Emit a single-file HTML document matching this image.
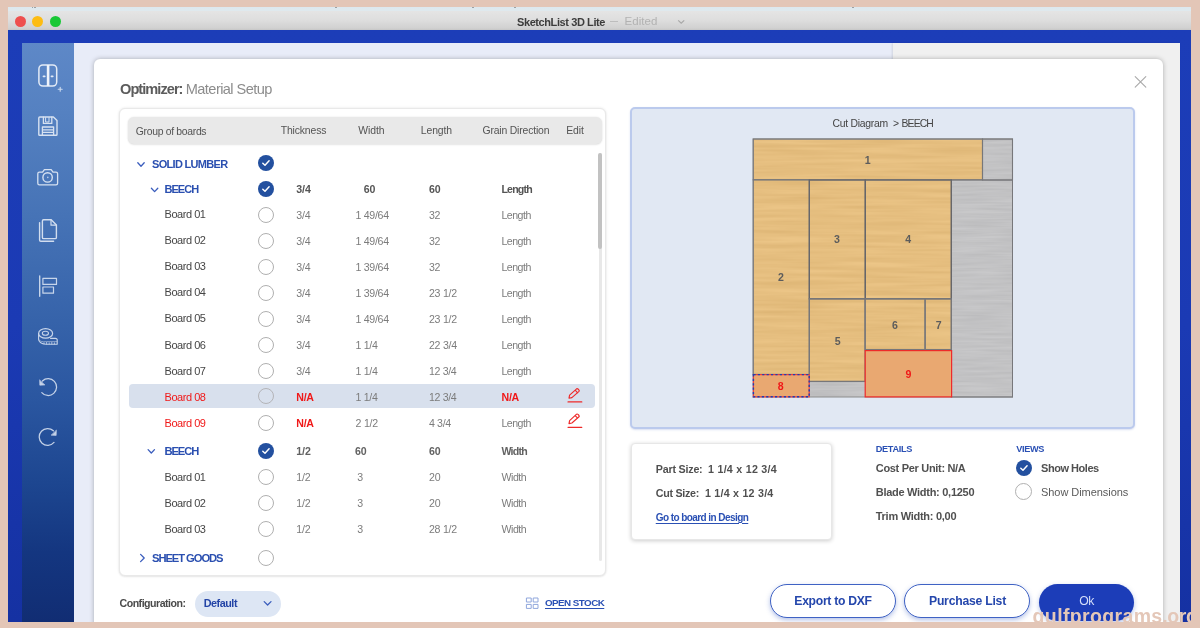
<!DOCTYPE html>
<html><head><meta charset="utf-8"><title>SketchList 3D Lite</title>
<style>
html,body{margin:0;padding:0;}
body{width:1200px;height:628px;overflow:hidden;background:#e3c6b7;position:relative;font-family:"Liberation Sans",sans-serif;}
.abs,.t,svg{position:absolute;}
.t{white-space:nowrap;line-height:1;font-family:"Liberation Sans",sans-serif;}
#win{left:8px;top:7px;width:1183px;height:615px;overflow:hidden;background:#1c3db8;}
/* everything inside #stage uses page coordinates */
#stage{will-change:transform;position:absolute;left:-8px;top:-7px;width:1200px;height:628px;}
#tbar{left:8px;top:7px;width:1183px;height:23px;background:linear-gradient(#dde8ee 0,#dfe9ee 3.5px,#e4e4e4 4.5px,#dedede 13px,#d1d1d1 21px,#c6c6c6 23px);}
.dot{width:11px;height:11px;border-radius:50%;top:15.5px;}
#frame{left:8px;top:30px;width:1183px;height:592px;background:linear-gradient(#1c3db8 0,#1b3ab4 50%,#1531a2 100%);}
#side{left:22px;top:43px;width:52px;height:579px;background:linear-gradient(#5e88c7 0,#5581c1 12%,#4673b6 30%,#3663aa 48%,#2a56a0 62%,#1d4690 76%,#143680 88%,#112d73 100%);}
#mainL{left:74px;top:43px;width:819px;height:579px;background:#e8ecf8;}
#mainR{left:893px;top:43px;width:287px;height:579px;background:#f0f0f0;box-shadow:-1px 0 2px rgba(0,0,0,.10);}
#modal{left:94px;top:59px;width:1069px;height:580px;background:#fff;border-radius:6px;box-shadow:0 0 5px rgba(0,0,0,.28);}
#tbl{left:119px;top:108px;width:487px;height:468px;box-sizing:border-box;border:1px solid #e9e9e9;border-radius:6px;background:#fff;box-shadow:0 0 3px rgba(0,0,0,.10),0 1px 2px rgba(0,0,0,.06);}
#thead{left:127.5px;top:116.5px;width:474px;height:27.7px;background:#e9e9e9;border-radius:6px;box-shadow:0 0 2px rgba(0,0,0,.10),0 1px 2px rgba(0,0,0,.08);}
#sbtrack{left:598.5px;top:153px;width:3px;height:408px;background:#e8e8e8;border-radius:2px;}
#sbthumb{left:598px;top:153px;width:4px;height:96px;background:#c2c2c2;border-radius:2px;}
#hl{left:128.5px;top:384px;width:466.5px;height:24px;background:#d8e0ed;border-radius:4px;}
.rad{width:16px;height:16px;box-sizing:border-box;border:1.4px solid #b0b0b0;border-radius:50%;background:#fff;}
.chk{width:16px;height:16px;border-radius:50%;background:#23509f;}
#dia{left:630px;top:107px;width:504.5px;height:321.5px;box-sizing:border-box;background:#e1e8f3;border:2px solid #bbcaed;border-radius:5px;box-shadow:0 1px 2px rgba(80,110,190,.22);}
#card{left:631px;top:443px;width:200.5px;height:96.5px;box-sizing:border-box;background:#fff;border:1px solid #e7e7e7;border-radius:4px;box-shadow:0 1px 4px rgba(0,0,0,.20);}
.btn{box-sizing:border-box;height:33.5px;top:584px;border-radius:17px;background:#fff;border:1.2px solid #3f62c4;box-shadow:0 2px 5px rgba(40,80,190,.35);}
#ok{left:1038.5px;top:583.5px;width:95.5px;height:37px;border-radius:18.5px;background:#1c3db8;box-shadow:0 2px 5px rgba(40,80,190,.35);}
#pill{left:195px;top:590.5px;width:85.5px;height:26.5px;border-radius:13.5px;background:#dde6f4;}

</style></head>
<body>
<div id="win" class="abs"><div id="stage">
<div id="tbar" class="abs"></div>
<div class="abs" style="left:31.5px;top:7px;width:1.6px;height:1.3px;background:#666;opacity:.55"></div><div class="abs" style="left:34.2px;top:7px;width:1.6px;height:1.3px;background:#666;opacity:.55"></div><div class="abs" style="left:335px;top:7px;width:1.6px;height:1.3px;background:#666;opacity:.55"></div><div class="abs" style="left:472px;top:7px;width:1.6px;height:1.3px;background:#666;opacity:.55"></div><div class="abs" style="left:514px;top:7px;width:1.6px;height:1.3px;background:#666;opacity:.55"></div><div class="abs" style="left:852px;top:7px;width:1.6px;height:1.3px;background:#666;opacity:.55"></div>
<div class="abs dot" style="left:15px;background:#ee4f4e"></div>
<div class="abs dot" style="left:32px;background:#fdbc12"></div>
<div class="abs dot" style="left:49.5px;background:#19c836"></div>
<svg style="left:677px;top:18px" width="9" height="8" viewBox="0 0 9 8"><path d="M1.2 2.4 L4.2 5.2 L7.2 2.4" fill="none" stroke="#a8a8a8" stroke-width="1.2"/></svg>
<div class="abs" style="left:609.6px;top:21.2px;width:8.4px;height:1px;background:#bdbdbd"></div>
<div id="frame" class="abs"></div>
<div id="side" class="abs"></div>
<div id="mainL" class="abs"></div>
<div id="mainR" class="abs"></div>
<svg style="left:0;top:0" width="1200" height="628" viewBox="0 0 1200 628" fill="none" stroke="#e2eaf6" stroke-width="1.5" stroke-linecap="round" stroke-linejoin="round">
<!-- 1 cabinet -->
<rect x="38.9" y="64.9" width="17.8" height="21.2" rx="4"/>
<path d="M48.1 65 V86" stroke-width="2.6" stroke-linecap="butt" stroke="#eef3fb"/>
<path d="M43.4 76.4 H44.8 M51.4 76.4 H52.8" stroke-width="1.6"/>
<path d="M60.2 87.2 V91.2 M58.2 89.2 H62.2" stroke-width="1.1" opacity=".85"/>
<!-- 2 floppy -->
<g opacity=".92">
<path d="M39.8 117 H53.4 L57 120.6 V134.4 Q57 135.2 56.2 135.2 H39.6 Q38.8 135.2 38.8 134.4 V118 Q38.8 117 39.8 117 Z" stroke-width="1.4"/>
<path d="M43.4 117.2 V123.4 H51.8 V117.2" stroke-width="1.3"/>
<path d="M45.6 117.6 V122 H49 V117.6" stroke-width="1"/>
<path d="M42.4 135 V127 H53.6 V135 M42.6 129.8 H53.4 M42.6 132.4 H53.4" stroke-width="1.3"/>
</g>
<!-- 3 camera -->
<g opacity=".92">
<path d="M39.4 172.2 H42.6 L44.4 169.6 H51.2 L53 172.2 H56 Q57.6 172.2 57.6 173.8 V183.2 Q57.6 184.8 56 184.8 H39.4 Q37.8 184.8 37.8 183.2 V173.8 Q37.8 172.2 39.4 172.2 Z" stroke-width="1.3"/>
<circle cx="47.6" cy="177.4" r="4.7" stroke-width="1.4"/>
<circle cx="47.8" cy="177.4" r="0.8" fill="#c4d4ec" stroke="none"/>
</g>
<!-- 4 docs -->
<g opacity=".9">
<path d="M43.6 219.8 H51.2 L56.4 225 V237.4 Q56.4 238.6 55.2 238.6 H43.6 Q42.4 238.6 42.4 237.4 V221 Q42.4 219.8 43.6 219.8 Z" stroke-width="1.4"/>
<path d="M51 220 V225.2 H56.2" stroke-width="1.2"/>
<path d="M39.6 222.6 V240 Q39.6 241.2 40.8 241.2 H53.6" stroke-width="1.4"/>
</g>
<!-- 5 align -->
<g opacity=".84">
<path d="M39.7 276 V296.2" stroke-width="1.4"/>
<rect x="42.9" y="278.4" width="13.6" height="6" stroke-width="1.2"/>
<rect x="42.9" y="287" width="10.6" height="6.2" stroke-width="1.2"/>
</g>
<!-- 6 tape -->
<g opacity=".85">
<ellipse cx="45.6" cy="333.4" rx="7" ry="4.8" stroke-width="1.2"/>
<ellipse cx="45.4" cy="333.2" rx="3.1" ry="2" stroke-width="1.1"/>
<path d="M38.6 333.6 V339.2 Q38.8 343.6 46 344.2 H57.2 V339.6 Q57 338.6 55.4 338.4 H50.6" stroke-width="1.1"/>
<path d="M38.8 339.6 Q40 342.4 46.4 341.6 H56.8" stroke-width="0.8" opacity=".7"/>
<path d="M44 342.8 V344 M46.6 342.4 V344 M49.2 342.8 V344 M51.8 342.4 V344 M54.4 342.8 V344" stroke-width="0.8"/>
</g>
<!-- 7 undo -->
<g opacity=".84">
<path d="M42.4 381 A8.4 8.4 0 1 1 41.8 392.6" stroke-width="1.25"/>
<path d="M39.6 380.2 L39.8 385.2 L44.6 385 Z" fill="#e2eaf6" stroke-width="0.6"/>
</g>
<!-- 8 redo -->
<g opacity=".84">
<path d="M53.4 430.8 A8.4 8.4 0 1 0 54 442.4" stroke-width="1.25"/>
<path d="M56.4 430.4 L56.2 435.4 L51.4 435.2 Z" fill="#e2eaf6" stroke-width="0.6"/>
</g>
</svg>

<div id="modal" class="abs"></div>
<div id="tbl" class="abs"></div>
<div id="thead" class="abs"></div>
<div id="sbtrack" class="abs"></div>
<div id="sbthumb" class="abs"></div>
<div id="hl" class="abs"></div>
<div class="abs chk" style="left:258.4px;top:155.35px"><svg style="left:0;top:0" width="16" height="16" viewBox="0 0 16 16"><path d="M4.8 8.2 L7.0 10.3 L11.1 5.8" fill="none" stroke="#fff" stroke-width="1.45" stroke-linecap="round" stroke-linejoin="round"/></svg></div>
<div class="abs chk" style="left:258.4px;top:181.10px"><svg style="left:0;top:0" width="16" height="16" viewBox="0 0 16 16"><path d="M4.8 8.2 L7.0 10.3 L11.1 5.8" fill="none" stroke="#fff" stroke-width="1.45" stroke-linecap="round" stroke-linejoin="round"/></svg></div>
<div class="abs rad" style="left:258.4px;top:206.70px;"></div>
<div class="abs rad" style="left:258.4px;top:232.70px;"></div>
<div class="abs rad" style="left:258.4px;top:258.70px;"></div>
<div class="abs rad" style="left:258.4px;top:284.70px;"></div>
<div class="abs rad" style="left:258.4px;top:310.70px;"></div>
<div class="abs rad" style="left:258.4px;top:336.70px;"></div>
<div class="abs rad" style="left:258.4px;top:362.90px;"></div>
<div class="abs rad" style="left:258.4px;top:388.40px;background:transparent;border-color:#b4b4b8;"></div>
<div class="abs rad" style="left:258.4px;top:415.10px;"></div>
<div class="abs chk" style="left:258.4px;top:442.90px"><svg style="left:0;top:0" width="16" height="16" viewBox="0 0 16 16"><path d="M4.8 8.2 L7.0 10.3 L11.1 5.8" fill="none" stroke="#fff" stroke-width="1.45" stroke-linecap="round" stroke-linejoin="round"/></svg></div>
<div class="abs rad" style="left:258.4px;top:468.80px;"></div>
<div class="abs rad" style="left:258.4px;top:494.60px;"></div>
<div class="abs rad" style="left:258.4px;top:520.80px;"></div>
<div class="abs rad" style="left:258.4px;top:549.60px;"></div>
<div class="abs chk" style="left:1015.8px;top:460px"><svg style="left:0;top:0" width="16" height="16" viewBox="0 0 16 16"><path d="M4.8 8.2 L7.0 10.3 L11.1 5.8" fill="none" stroke="#fff" stroke-width="1.45" stroke-linecap="round" stroke-linejoin="round"/></svg></div>
<div class="abs rad" style="left:1015.4px;top:483.4px;width:17px;height:17px"></div>
<div id="dia" class="abs"></div>
<svg style="left:0;top:0" width="1200" height="628" viewBox="0 0 1200 628">
<defs>
<filter id="fw" x="0" y="0" width="100%" height="100%" filterUnits="objectBoundingBox" color-interpolation-filters="sRGB">
<feTurbulence type="fractalNoise" baseFrequency="0.012 0.27" numOctaves="2" seed="7" result="n"/>
<feColorMatrix in="n" type="matrix" values="0.075 0 0 0 0.862  0.085 0 0 0 0.703  0.095 0 0 0 0.451  0 0 0 0 1" result="c"/>
<feComposite in="c" in2="SourceAlpha" operator="in"/>
</filter>
<filter id="fg" x="0" y="0" width="100%" height="100%" filterUnits="objectBoundingBox" color-interpolation-filters="sRGB">
<feTurbulence type="fractalNoise" baseFrequency="0.02 0.36" numOctaves="2" seed="11" result="n"/>
<feColorMatrix in="n" type="matrix" values="0.08 0 0 0 0.722  0.08 0 0 0 0.722  0.08 0 0 0 0.728  0 0 0 0 1" result="c"/>
<feComposite in="c" in2="SourceAlpha" operator="in"/>
</filter>
</defs>
<rect x="753.2" y="139" width="259.3" height="258" fill="#c3c3c3" filter="url(#fg)"/>
<path d="M753.2 139 H982.5 V180 H951.3 V349.6 H865.1 V381.4 H809.3 V374.4 H753.2 Z" fill="#e9bd7c" filter="url(#fw)"/>
<g stroke="#77777a" stroke-width="1.1" fill="none">
<rect x="753.2" y="139" width="259.3" height="258" stroke="#8c8c8c" stroke-width="1"/>
<rect x="982.5" y="139" width="30" height="41"/>
<rect x="951.3" y="180" width="61.2" height="217" stroke-width="1"/>
<rect x="753.2" y="139" width="229.3" height="40.8"/>
<rect x="753.2" y="179.8" width="56.1" height="194.6"/>
<rect x="809.3" y="180" width="56" height="118.8" stroke="#66666a" stroke-width="1.3"/>
<rect x="865.3" y="180" width="86" height="118.8" stroke="#66666a" stroke-width="1.3"/>
<rect x="809.3" y="298.8" width="55.8" height="82.6" stroke-width="1.3"/>
<rect x="865.1" y="298.8" width="60" height="50.8" stroke-width="1.3"/>
<rect x="925.1" y="298.8" width="26.2" height="50.8" stroke-width="1.3"/>
</g>
<rect x="865.2" y="350.6" width="86.4" height="46.3" fill="#e9a871" stroke="#ee2a2a" stroke-width="1.2"/>
<rect x="753.4" y="374.6" width="55.8" height="22.2" fill="#e9a871" stroke="#ee3a3a" stroke-width="1.2"/>
<rect x="753.4" y="374.6" width="55.8" height="22.2" fill="none" stroke="#1e3fb4" stroke-width="1.4" stroke-dasharray="2.2 2.2"/>
</svg>

<div id="card" class="abs"></div>
<div id="pill" class="abs"></div>
<div class="abs btn" style="left:769.5px;width:126.5px"></div>
<div class="abs btn" style="left:904px;width:126px"></div>
<div id="ok" class="abs"></div>
<svg style="left:0;top:0" width="1200" height="628" viewBox="0 0 1200 628" fill="none" stroke-linecap="round" stroke-linejoin="round">
<!-- close X -->
<path d="M1135.2 76.6 L1145.8 87.2 M1145.8 76.6 L1135.2 87.2" stroke="#a9a9a9" stroke-width="1.1"/>
<!-- chevrons -->
<g stroke="#3a5dbd" stroke-width="1.3">
<path d="M137.8 162.8 L141 166.2 L144.2 162.8"/>
<path d="M151.4 188.2 L154.6 191.6 L157.8 188.2"/>
<path d="M148.1 449.6 L151.3 453 L154.5 449.6"/>
<path d="M140.6 554.4 L144.2 558 L140.6 561.6"/>
<path d="M264.2 601.6 L267.6 605 L271 601.6"/>
</g>
<!-- grid icon -->
<g stroke="#8fa6dc" stroke-width="1">
<rect x="526.8" y="598" width="4.4" height="4"/><rect x="533.6" y="598" width="4.4" height="4"/>
<rect x="526.8" y="604.4" width="4.4" height="4"/><rect x="533.6" y="604.4" width="4.4" height="4"/>
</g>
<!-- pencils -->
<g stroke="#ee2a2a" stroke-width="1.15">
<g><path d="M569 398.2 L569.6 395.2 L576.6 388.8 Q577.3 388.3 578 389 L579 390.1 Q579.6 390.8 579 391.4 L571.9 397.6 Z M575.2 390.2 L577.6 392.8"/><path d="M568 401.9 H581.8"/></g>
<g transform="translate(0 25.4)"><path d="M569 398.2 L569.6 395.2 L576.6 388.8 Q577.3 388.3 578 389 L579 390.1 Q579.6 390.8 579 391.4 L571.9 397.6 Z M575.2 390.2 L577.6 392.8"/><path d="M568 401.9 H581.8"/></g>
</g>
</svg>

<span class="t" style="left:517.00px;top:16.60px;font-size:11px;font-weight:700;color:#3c3c3c;letter-spacing:-0.409px;">SketchList 3D Lite</span>
<span class="t" style="left:624.60px;top:16.35px;font-size:11.5px;font-weight:400;color:#b2b2b2;letter-spacing:0.032px;">Edited</span>
<span class="t" style="left:120.00px;top:81.70px;font-size:14.6px;font-weight:700;color:#5c5c5c;letter-spacing:-0.967px;">Optimizer:</span>
<span class="t" style="left:185.75px;top:81.70px;font-size:14.6px;font-weight:400;color:#8c8c8c;letter-spacing:-0.579px;">Material Setup</span>
<span class="t" style="left:135.75px;top:127.40px;font-size:10.4px;font-weight:400;color:#545454;letter-spacing:-0.306px;">Group of boards</span>
<span class="t" style="left:280.75px;top:125.90px;font-size:10.4px;font-weight:400;color:#545454;letter-spacing:-0.142px;">Thickness</span>
<span class="t" style="left:358.25px;top:125.90px;font-size:10.4px;font-weight:400;color:#545454;letter-spacing:-0.062px;">Width</span>
<span class="t" style="left:420.75px;top:125.90px;font-size:10.4px;font-weight:400;color:#545454;letter-spacing:-0.089px;">Length</span>
<span class="t" style="left:482.50px;top:125.90px;font-size:10.4px;font-weight:400;color:#545454;letter-spacing:-0.170px;">Grain Direction</span>
<span class="t" style="left:566.25px;top:125.90px;font-size:10.4px;font-weight:400;color:#545454;letter-spacing:-0.102px;">Edit</span>
<span class="t" style="left:152.00px;top:159.10px;font-size:11.0px;font-weight:700;color:#2a4fb0;letter-spacing:-0.686px;">SOLID LUMBER</span>
<span class="t" style="left:164.50px;top:183.90px;font-size:11.0px;font-weight:700;color:#2a4fb0;letter-spacing:-0.953px;">BEECH</span>
<span class="t" style="left:296.20px;top:184.30px;font-size:10.6px;font-weight:700;color:#555;letter-spacing:0.022px;">3/4</span>
<span class="t" style="left:363.75px;top:184.30px;font-size:10.6px;font-weight:700;color:#555;letter-spacing:-0.123px;">60</span>
<span class="t" style="left:428.90px;top:184.30px;font-size:10.6px;font-weight:700;color:#555;letter-spacing:-0.123px;">60</span>
<span class="t" style="left:501.40px;top:184.30px;font-size:10.6px;font-weight:700;color:#555;letter-spacing:-0.802px;">Length</span>
<span class="t" style="left:164.50px;top:209.40px;font-size:11.0px;font-weight:400;color:#454545;letter-spacing:-0.457px;">Board 01</span>
<span class="t" style="left:296.20px;top:209.60px;font-size:10.6px;font-weight:400;color:#7c7c7c;letter-spacing:-0.078px;">3/4</span>
<span class="t" style="left:355.50px;top:209.60px;font-size:10.6px;font-weight:400;color:#7c7c7c;letter-spacing:-0.301px;">1 49/64</span>
<span class="t" style="left:428.90px;top:209.60px;font-size:10.6px;font-weight:400;color:#7c7c7c;letter-spacing:-0.273px;">32</span>
<span class="t" style="left:501.50px;top:209.60px;font-size:10.6px;font-weight:400;color:#7c7c7c;letter-spacing:-0.518px;">Length</span>
<span class="t" style="left:164.50px;top:235.40px;font-size:11.0px;font-weight:400;color:#454545;letter-spacing:-0.457px;">Board 02</span>
<span class="t" style="left:296.20px;top:235.60px;font-size:10.6px;font-weight:400;color:#7c7c7c;letter-spacing:-0.078px;">3/4</span>
<span class="t" style="left:355.50px;top:235.60px;font-size:10.6px;font-weight:400;color:#7c7c7c;letter-spacing:-0.301px;">1 49/64</span>
<span class="t" style="left:428.90px;top:235.60px;font-size:10.6px;font-weight:400;color:#7c7c7c;letter-spacing:-0.273px;">32</span>
<span class="t" style="left:501.50px;top:235.60px;font-size:10.6px;font-weight:400;color:#7c7c7c;letter-spacing:-0.518px;">Length</span>
<span class="t" style="left:164.50px;top:261.40px;font-size:11.0px;font-weight:400;color:#454545;letter-spacing:-0.457px;">Board 03</span>
<span class="t" style="left:296.20px;top:261.60px;font-size:10.6px;font-weight:400;color:#7c7c7c;letter-spacing:-0.078px;">3/4</span>
<span class="t" style="left:355.50px;top:261.60px;font-size:10.6px;font-weight:400;color:#7c7c7c;letter-spacing:-0.301px;">1 39/64</span>
<span class="t" style="left:428.90px;top:261.60px;font-size:10.6px;font-weight:400;color:#7c7c7c;letter-spacing:-0.273px;">32</span>
<span class="t" style="left:501.50px;top:261.60px;font-size:10.6px;font-weight:400;color:#7c7c7c;letter-spacing:-0.518px;">Length</span>
<span class="t" style="left:164.50px;top:287.40px;font-size:11.0px;font-weight:400;color:#454545;letter-spacing:-0.457px;">Board 04</span>
<span class="t" style="left:296.20px;top:287.60px;font-size:10.6px;font-weight:400;color:#7c7c7c;letter-spacing:-0.078px;">3/4</span>
<span class="t" style="left:355.50px;top:287.60px;font-size:10.6px;font-weight:400;color:#7c7c7c;letter-spacing:-0.301px;">1 39/64</span>
<span class="t" style="left:428.90px;top:287.60px;font-size:10.6px;font-weight:400;color:#7c7c7c;letter-spacing:-0.245px;">23 1/2</span>
<span class="t" style="left:501.50px;top:287.60px;font-size:10.6px;font-weight:400;color:#7c7c7c;letter-spacing:-0.518px;">Length</span>
<span class="t" style="left:164.50px;top:313.40px;font-size:11.0px;font-weight:400;color:#454545;letter-spacing:-0.457px;">Board 05</span>
<span class="t" style="left:296.20px;top:313.60px;font-size:10.6px;font-weight:400;color:#7c7c7c;letter-spacing:-0.078px;">3/4</span>
<span class="t" style="left:355.50px;top:313.60px;font-size:10.6px;font-weight:400;color:#7c7c7c;letter-spacing:-0.301px;">1 49/64</span>
<span class="t" style="left:428.90px;top:313.60px;font-size:10.6px;font-weight:400;color:#7c7c7c;letter-spacing:-0.245px;">23 1/2</span>
<span class="t" style="left:501.50px;top:313.60px;font-size:10.6px;font-weight:400;color:#7c7c7c;letter-spacing:-0.518px;">Length</span>
<span class="t" style="left:164.50px;top:339.50px;font-size:11.0px;font-weight:400;color:#454545;letter-spacing:-0.457px;">Board 06</span>
<span class="t" style="left:296.20px;top:339.70px;font-size:10.6px;font-weight:400;color:#7c7c7c;letter-spacing:-0.078px;">3/4</span>
<span class="t" style="left:355.50px;top:339.70px;font-size:10.6px;font-weight:400;color:#7c7c7c;letter-spacing:-0.312px;">1 1/4</span>
<span class="t" style="left:428.90px;top:339.70px;font-size:10.6px;font-weight:400;color:#7c7c7c;letter-spacing:-0.245px;">22 3/4</span>
<span class="t" style="left:501.50px;top:339.70px;font-size:10.6px;font-weight:400;color:#7c7c7c;letter-spacing:-0.518px;">Length</span>
<span class="t" style="left:164.50px;top:365.90px;font-size:11.0px;font-weight:400;color:#454545;letter-spacing:-0.457px;">Board 07</span>
<span class="t" style="left:296.20px;top:366.10px;font-size:10.6px;font-weight:400;color:#7c7c7c;letter-spacing:-0.078px;">3/4</span>
<span class="t" style="left:355.50px;top:366.10px;font-size:10.6px;font-weight:400;color:#7c7c7c;letter-spacing:-0.312px;">1 1/4</span>
<span class="t" style="left:428.90px;top:366.10px;font-size:10.6px;font-weight:400;color:#7c7c7c;letter-spacing:-0.328px;">12 3/4</span>
<span class="t" style="left:501.50px;top:366.10px;font-size:10.6px;font-weight:400;color:#7c7c7c;letter-spacing:-0.518px;">Length</span>
<span class="t" style="left:164.50px;top:391.60px;font-size:11.0px;font-weight:400;color:#f01818;letter-spacing:-0.457px;">Board 08</span>
<span class="t" style="left:296.30px;top:391.80px;font-size:10.6px;font-weight:700;color:#f01818;letter-spacing:-0.283px;">N/A</span>
<span class="t" style="left:355.50px;top:391.80px;font-size:10.6px;font-weight:400;color:#7c7c7c;letter-spacing:-0.312px;">1 1/4</span>
<span class="t" style="left:428.90px;top:391.80px;font-size:10.6px;font-weight:400;color:#7c7c7c;letter-spacing:-0.328px;">12 3/4</span>
<span class="t" style="left:501.60px;top:391.80px;font-size:10.6px;font-weight:700;color:#f01818;letter-spacing:-0.283px;">N/A</span>
<span class="t" style="left:164.50px;top:417.80px;font-size:11.0px;font-weight:400;color:#f01818;letter-spacing:-0.457px;">Board 09</span>
<span class="t" style="left:296.30px;top:418.00px;font-size:10.6px;font-weight:700;color:#f01818;letter-spacing:-0.283px;">N/A</span>
<span class="t" style="left:355.50px;top:418.00px;font-size:10.6px;font-weight:400;color:#7c7c7c;letter-spacing:-0.212px;">2 1/2</span>
<span class="t" style="left:428.90px;top:418.00px;font-size:10.6px;font-weight:400;color:#7c7c7c;letter-spacing:-0.312px;">4 3/4</span>
<span class="t" style="left:501.50px;top:418.00px;font-size:10.6px;font-weight:400;color:#7c7c7c;letter-spacing:-0.518px;">Length</span>
<span class="t" style="left:164.50px;top:445.70px;font-size:11.2px;font-weight:700;color:#2a4fb0;letter-spacing:-1.084px;">BEECH</span>
<span class="t" style="left:296.20px;top:446.00px;font-size:10.6px;font-weight:700;color:#626262;letter-spacing:0.022px;">1/2</span>
<span class="t" style="left:355.00px;top:446.00px;font-size:10.6px;font-weight:700;color:#626262;letter-spacing:-0.123px;">60</span>
<span class="t" style="left:428.90px;top:446.00px;font-size:10.6px;font-weight:700;color:#626262;letter-spacing:-0.123px;">60</span>
<span class="t" style="left:501.40px;top:446.00px;font-size:10.6px;font-weight:700;color:#626262;letter-spacing:-0.716px;">Width</span>
<span class="t" style="left:164.50px;top:471.80px;font-size:11.0px;font-weight:400;color:#454545;letter-spacing:-0.457px;">Board 01</span>
<span class="t" style="left:296.20px;top:472.00px;font-size:10.6px;font-weight:400;color:#7c7c7c;letter-spacing:-0.078px;">1/2</span>
<span class="t" style="left:357.30px;top:472.00px;font-size:10.6px;font-weight:400;color:#7c7c7c;letter-spacing:0.000px;">3</span>
<span class="t" style="left:428.90px;top:472.00px;font-size:10.6px;font-weight:400;color:#7c7c7c;letter-spacing:-0.148px;">20</span>
<span class="t" style="left:501.50px;top:472.00px;font-size:10.6px;font-weight:400;color:#7c7c7c;letter-spacing:-0.469px;">Width</span>
<span class="t" style="left:164.50px;top:497.50px;font-size:11.0px;font-weight:400;color:#454545;letter-spacing:-0.457px;">Board 02</span>
<span class="t" style="left:296.20px;top:497.70px;font-size:10.6px;font-weight:400;color:#7c7c7c;letter-spacing:-0.078px;">1/2</span>
<span class="t" style="left:357.30px;top:497.70px;font-size:10.6px;font-weight:400;color:#7c7c7c;letter-spacing:0.000px;">3</span>
<span class="t" style="left:428.90px;top:497.70px;font-size:10.6px;font-weight:400;color:#7c7c7c;letter-spacing:-0.148px;">20</span>
<span class="t" style="left:501.50px;top:497.70px;font-size:10.6px;font-weight:400;color:#7c7c7c;letter-spacing:-0.469px;">Width</span>
<span class="t" style="left:164.50px;top:523.70px;font-size:11.0px;font-weight:400;color:#454545;letter-spacing:-0.457px;">Board 03</span>
<span class="t" style="left:296.20px;top:523.90px;font-size:10.6px;font-weight:400;color:#7c7c7c;letter-spacing:-0.078px;">1/2</span>
<span class="t" style="left:357.30px;top:523.90px;font-size:10.6px;font-weight:400;color:#7c7c7c;letter-spacing:0.000px;">3</span>
<span class="t" style="left:428.90px;top:523.90px;font-size:10.6px;font-weight:400;color:#7c7c7c;letter-spacing:-0.245px;">28 1/2</span>
<span class="t" style="left:501.50px;top:523.90px;font-size:10.6px;font-weight:400;color:#7c7c7c;letter-spacing:-0.469px;">Width</span>
<span class="t" style="left:152.00px;top:553.10px;font-size:11.2px;font-weight:700;color:#2a4fb0;letter-spacing:-1.051px;">SHEET GOODS</span>
<span class="t" style="left:119.50px;top:597.90px;font-size:10.6px;font-weight:700;color:#4a4a4a;letter-spacing:-0.498px;">Configuration:</span>
<span class="t" style="left:203.75px;top:597.80px;font-size:10.8px;font-weight:700;color:#2344a6;letter-spacing:-0.478px;">Default</span>
<span class="t" style="left:545.00px;top:597.70px;font-size:9.8px;font-weight:700;color:#2a50b4;letter-spacing:-0.536px;text-decoration:underline;text-underline-offset:1.5px;text-decoration-thickness:1px;">OPEN STOCK</span>
<span class="t" style="left:832.50px;top:118.70px;font-size:10.4px;font-weight:400;color:#444;letter-spacing:-0.257px;">Cut Diagram</span>
<span class="t" style="left:893.06px;top:118.70px;font-size:10.4px;font-weight:400;color:#444;letter-spacing:0.000px;">></span>
<span class="t" style="left:901.50px;top:118.70px;font-size:10.4px;font-weight:400;color:#444;letter-spacing:-0.863px;">BEECH</span>
<span class="t" style="left:864.75px;top:154.90px;font-size:10.6px;font-weight:700;color:#5c5c5c;letter-spacing:0.000px;">1</span>
<span class="t" style="left:778.05px;top:271.90px;font-size:10.6px;font-weight:700;color:#5c5c5c;letter-spacing:0.000px;">2</span>
<span class="t" style="left:834.05px;top:234.00px;font-size:10.6px;font-weight:700;color:#5c5c5c;letter-spacing:0.000px;">3</span>
<span class="t" style="left:905.35px;top:234.00px;font-size:10.6px;font-weight:700;color:#5c5c5c;letter-spacing:0.000px;">4</span>
<span class="t" style="left:834.65px;top:336.00px;font-size:10.6px;font-weight:700;color:#5c5c5c;letter-spacing:0.000px;">5</span>
<span class="t" style="left:892.05px;top:319.70px;font-size:10.6px;font-weight:700;color:#5c5c5c;letter-spacing:0.000px;">6</span>
<span class="t" style="left:935.85px;top:319.70px;font-size:10.6px;font-weight:700;color:#5c5c5c;letter-spacing:0.000px;">7</span>
<span class="t" style="left:905.45px;top:369.30px;font-size:10.6px;font-weight:700;color:#f01818;letter-spacing:0.000px;">9</span>
<span class="t" style="left:777.85px;top:381.00px;font-size:10.6px;font-weight:700;color:#f01818;letter-spacing:0.000px;">8</span>
<span class="t" style="left:655.75px;top:463.65px;font-size:10.7px;font-weight:700;color:#505050;letter-spacing:-0.197px;">Part Size:</span>
<span class="t" style="left:708.00px;top:463.65px;font-size:10.7px;font-weight:700;color:#505050;letter-spacing:0.259px;">1 1/4 x 12 3/4</span>
<span class="t" style="left:655.75px;top:487.85px;font-size:10.7px;font-weight:700;color:#505050;letter-spacing:-0.276px;">Cut Size:</span>
<span class="t" style="left:705.00px;top:487.85px;font-size:10.7px;font-weight:700;color:#505050;letter-spacing:0.223px;">1 1/4 x 12 3/4</span>
<span class="t" style="left:655.75px;top:512.60px;font-size:10px;font-weight:700;color:#2a50b4;letter-spacing:-0.569px;text-decoration:underline;text-underline-offset:1.5px;text-decoration-thickness:1px;">Go to board in Design</span>
<span class="t" style="left:875.75px;top:444.70px;font-size:9.2px;font-weight:700;color:#2a50b4;letter-spacing:-0.339px;">DETAILS</span>
<span class="t" style="left:875.75px;top:462.50px;font-size:11px;font-weight:700;color:#505050;letter-spacing:-0.311px;">Cost Per Unit: N/A</span>
<span class="t" style="left:875.75px;top:486.70px;font-size:11px;font-weight:700;color:#505050;letter-spacing:-0.280px;">Blade Width: 0,1250</span>
<span class="t" style="left:875.75px;top:510.90px;font-size:11px;font-weight:700;color:#505050;letter-spacing:-0.272px;">Trim Width: 0,00</span>
<span class="t" style="left:1016.25px;top:444.70px;font-size:9.2px;font-weight:700;color:#2a50b4;letter-spacing:-0.372px;">VIEWS</span>
<span class="t" style="left:1041.00px;top:462.50px;font-size:11px;font-weight:700;color:#505050;letter-spacing:-0.459px;">Show Holes</span>
<span class="t" style="left:1041.00px;top:486.70px;font-size:11px;font-weight:400;color:#5a5a5a;letter-spacing:-0.053px;">Show Dimensions</span>
<span class="t" style="left:794.30px;top:595.10px;font-size:12.2px;font-weight:700;color:#2547ac;letter-spacing:-0.296px;">Export to DXF</span>
<span class="t" style="left:929.00px;top:595.10px;font-size:12.2px;font-weight:700;color:#2547ac;letter-spacing:-0.226px;">Purchase List</span>
<span class="t" style="left:1079.30px;top:595.10px;font-size:12.2px;font-weight:400;color:#d4defa;letter-spacing:-0.439px;">Ok</span>
<span class="t" style="left:1032.60px;top:607.45px;font-size:19.5px;font-weight:700;color:#e4c7b8;letter-spacing:0.359px;">gulfprograms</span>
<span class="t" style="left:1162.20px;top:607.45px;font-size:19.5px;font-weight:700;color:#e4c7b8;letter-spacing:-0.386px;">.org</span>
</div></div>

</body></html>
